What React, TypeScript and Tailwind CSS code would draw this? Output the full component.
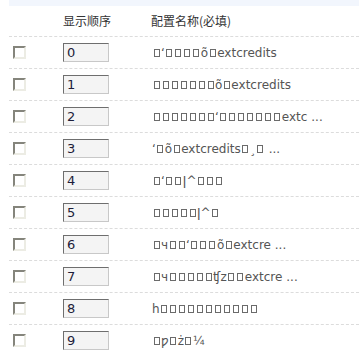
import { FC, Fragment } from 'react'

// '#' stands for a missing-glyph box in the garbled config names
const rows: { order: number; name: string }[] = [
  { order: 0, name: '#ʻ####õ#extcredits' },
  { order: 1, name: '#######õ#extcredits' },
  { order: 2, name: '#######ʻ#######extc ...' },
  { order: 3, name: 'ʻ#õ#extcredits#¸# ...' },
  { order: 4, name: '#ʻ##ǀ^###' },
  { order: 5, name: '#####ǀ^#' },
  { order: 6, name: '#ч##ʻ###õ#extcre ...' },
  { order: 7, name: '#ч#####ʧz##extcre ...' },
  { order: 8, name: 'h###########' },
  { order: 9, name: '#ƿ#ż#¼' },
]

const Tofu: FC = () => (
  <span className="inline-block w-[6px] h-[8px] border border-[#6b6b6b] ml-[1.5px] mr-[1.5px] align-[-0px]" />
)

const Garbled: FC<{ text: string }> = ({ text }) => (
  <>
    {text.split('').map((ch, i) =>
      ch === '#' ? <Tofu key={i} /> : <Fragment key={i}>{ch}</Fragment>
    )}
  </>
)

const Checkbox: FC = () => (
  <span className="block w-[13px] h-[13px] border-2 border-t-[#85857c] border-l-[#85857c] border-r-[#ecece4] border-b-[#ecece4] bg-white" />
)

export default function App() {
  return (
    <div className="w-[359px] h-[356px] overflow-hidden bg-white font-['DejaVu_Sans',sans-serif] text-[12px] text-[#555]">
      <div className="ml-[9px] h-[6px] bg-[#f2f6fd]" />
      <div className="ml-[9px]">
        <div className="flex items-center h-[31px] border-b border-dashed border-[#dcdcdc] text-[#333] font-['Noto_Sans_CJK_SC','DejaVu_Sans',sans-serif]">
          <div className="w-[54px]" />
          <div className="w-[88px]">显示顺序</div>
          <div>配置名称(必填)</div>
        </div>
        {rows.map((r) => (
          <div key={r.order} className="flex items-center h-[32px] border-b border-dashed border-[#dcdcdc]">
            <div className="w-[54px] pl-[4px]">
              <Checkbox />
            </div>
            <div className="w-[88px]">
              <div className="w-[46px] h-[19px] border border-t-[#6e6e6e] border-l-[#6e6e6e] border-r-[#c8c8c8] border-b-[#c8c8c8] bg-[#f4f4f4] pl-[3px] text-[13px] leading-[17px] text-[#1d1d3a]">
                {r.order}
              </div>
            </div>
            <div className="whitespace-nowrap pl-[1px]">
              <Garbled text={r.name} />
            </div>
          </div>
        ))}
      </div>
    </div>
  )
}
